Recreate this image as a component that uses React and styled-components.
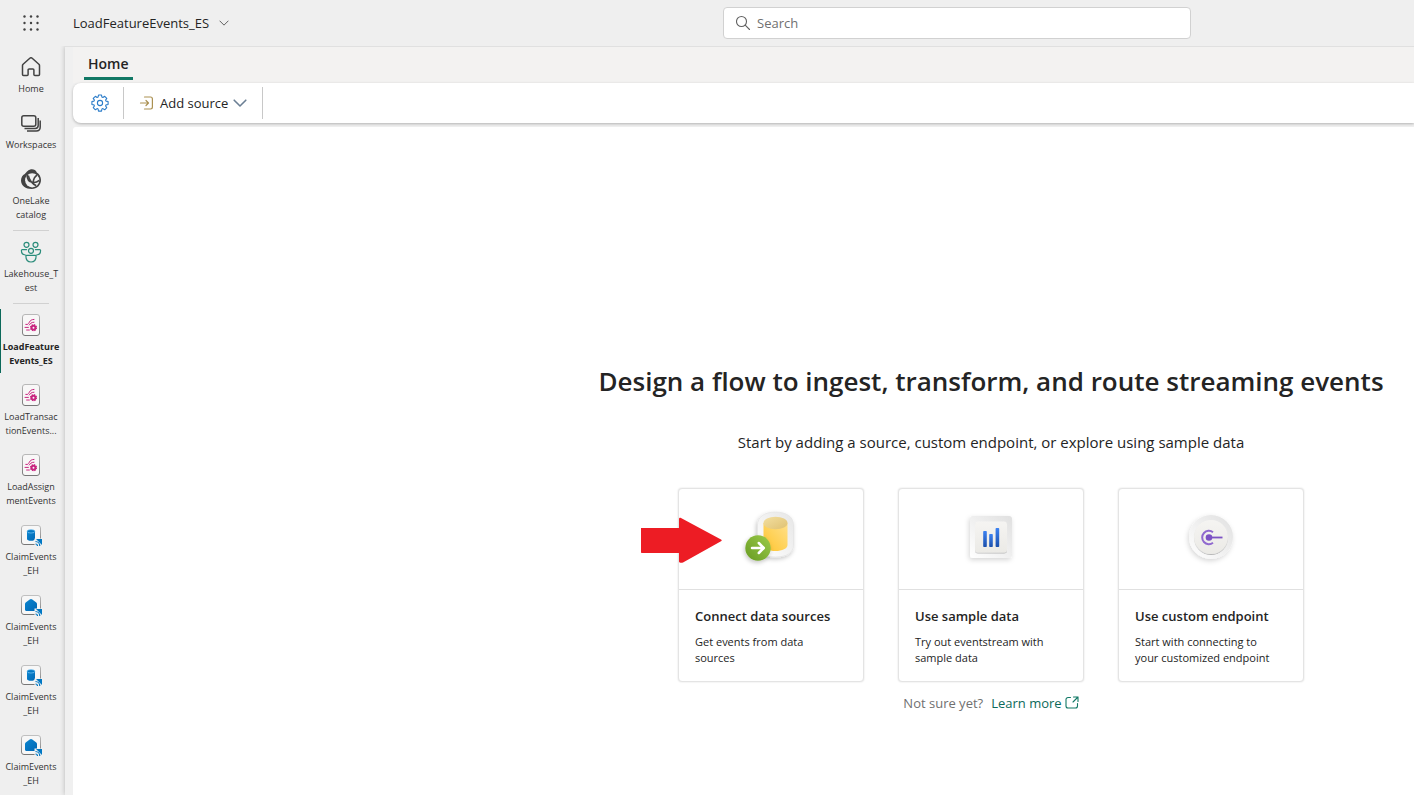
import React from "react";
import styled, { createGlobalStyle } from "styled-components";

const GlobalStyle = createGlobalStyle`
  *, *::before, *::after { box-sizing: border-box; }
  body {
    margin: 0;
    background: #efefef;
    color: #242424;
    font-family: "Open Sans", "Noto Sans", sans-serif;
    font-size: 13px;
    line-height: 20px;
  }
  button { font: inherit; color: inherit; background: none; border: 0; padding: 0; cursor: pointer; }
  svg { display: block; flex: none; }
`;

const Page = styled.div`
  min-height: 100vh;
  display: flex;
  flex-direction: column;
  overflow-x: hidden;
`;

const Header = styled.header`
  display: flex;
  align-items: center;
  height: 46px;
`;

const WaffleButton = styled.button`
  display: grid;
  place-items: center;
  width: 62px;
  height: 46px;
`;

const TitleArea = styled.div`
  flex: 0 1 661px;
  padding-left: 11px;
`;

const TitleButton = styled.button`
  display: flex;
  align-items: center;
  gap: 10px;
  white-space: nowrap;
`;

const SearchBox = styled.label`
  display: flex;
  align-items: center;
  gap: 6px;
  flex: 0 1 468px;
  height: 32px;
  padding: 0 12px;
  background: #fff;
  border: 1px solid #d1d1d1;
  border-radius: 4px;
`;

const SearchInput = styled.input`
  flex: 1;
  min-width: 0;
  border: 0;
  padding: 0;
  outline: 0;
  background: none;
  font: inherit;
  &::placeholder { color: #707070; opacity: 1; }
`;

const Body = styled.div`
  flex: 1;
  display: flex;
`;

const Nav = styled.nav`
  flex: none;
  width: 65px;
  padding-top: 3px;
`;

const NavGroup = styled.ul`
  list-style: none;
  margin: 0;
  padding: 0;
  display: flex;
  flex-direction: column;
  gap: 4px;
`;

const NavDivider = styled.hr`
  width: 36px;
  height: 1px;
  margin: 3px 0 3px 13px;
  border: 0;
  background: #d1d1d1;
`;

const NavButton = styled.button`
  position: relative;
  display: flex;
  flex-direction: column;
  align-items: center;
  gap: 3px;
  width: 62px;
  padding: 6px 0 5px;
  font-size: 9px;
  line-height: 14px;
  font-weight: ${(p) => (p.$active ? 700 : 400)};
  color: ${(p) => (p.$active ? "#242424" : "#333")};
  white-space: nowrap;
  &::before {
    content: "";
    display: ${(p) => (p.$active ? "block" : "none")};
    position: absolute;
    left: 0;
    top: 2px;
    bottom: 0;
    width: 1px;
    background: #0c695a;
  }
`;

const NavIcon = styled.span`
  display: grid;
  place-items: center;
  width: 24px;
  height: 24px;
`;

const NavLine = styled.span`
  display: block;
`;

const Main = styled.main`
  flex: 1;
  min-width: 0;
  display: flex;
  flex-direction: column;
  padding-left: 8px;
  background: #f0f0f0;
  border-top: 1px solid #e0e0e0;
  box-shadow: 0 0 5px rgba(0, 0, 0, 0.24);
  clip-path: inset(0 0 0 -8px);
`;

const TabBar = styled.div`
  display: flex;
  height: 36px;
  padding-left: 11px;
  background: #f3f2f1;
`;

const Tab = styled.button`
  height: 33px;
  padding: 3px 4px 0;
  font-size: 14px;
  font-weight: 600;
  border-bottom: 3px solid #117865;
`;

const Toolbar = styled.div`
  display: flex;
  align-items: center;
  height: 40px;
  margin-bottom: 4px;
  background: #fff;
  border-radius: 8px 0 0 8px;
  box-shadow: 0 1px 3px rgba(0, 0, 0, 0.26);
`;

const ToolButton = styled.button`
  display: flex;
  align-items: center;
  gap: 5px;
  height: 32px;
  padding: 0 ${(p) => (p.$wide ? 15 : 0)}px;
`;

const SettingsButton = styled(ToolButton)`
  width: 50px;
  padding-left: 3px;
  justify-content: center;
`;

const Separator = styled.span`
  width: 1px;
  height: 32px;
  background: #c8c8c8;
`;

const Canvas = styled.section`
  flex: 1;
  display: flex;
  flex-direction: column;
  align-items: center;
  padding: 236px 0 40px 495px;
  background: #fff;
  border-radius: 3px 0 0 0;
`;

const Heading = styled.h1`
  margin: 0;
  font-size: 26px;
  line-height: 36px;
  font-weight: 600;
  white-space: nowrap;
`;

const Subheading = styled.p`
  margin: 33px 0 36px;
  font-size: 15px;
  line-height: 20px;
  white-space: nowrap;
`;

const CardRow = styled.div`
  display: flex;
  gap: 34px;
`;

const Card = styled.button`
  position: relative;
  display: flex;
  flex-direction: column;
  justify-content: flex-start;
  width: 186px;
  height: 194px;
  text-align: left;
  background: #fff;
  border: 1px solid #e4e4e4;
  border-radius: 4px;
  box-shadow: 0 0 2px rgba(0, 0, 0, 0.14);
`;

const CardArt = styled.span`
  flex: none;
  display: grid;
  place-items: center;
  width: 100%;
  height: 101px;
  padding-bottom: 4px;
  border-bottom: 1px solid #e0e0e0;
`;

const CardText = styled.span`
  display: flex;
  flex-direction: column;
  gap: 8px;
  padding: 16px 24px 0 16px;
  font-size: 11px;
  line-height: 16px;
`;

const CardTitle = styled.strong`
  font-size: 13px;
  line-height: 20px;
  font-weight: 600;
  white-space: nowrap;
`;

const Pointer = styled.svg`
  position: absolute;
  left: -39px;
  top: 28px;
`;

const Footnote = styled.p`
  display: flex;
  gap: 8px;
  margin: 11px 0 0;
  color: #707070;
`;

const LearnLink = styled.a`
  display: flex;
  align-items: center;
  gap: 3px;
  color: #0c695a;
  text-decoration: none;
`;

const WaffleIcon = () => (
  <svg width="16" height="16" viewBox="0 0 16 16" fill="#424242">
    {[1.5, 8, 14.5].map((y) => [1.5, 8, 14.5].map((x) => <circle key={`${x}-${y}`} cx={x} cy={y} r="1.2" />))}
  </svg>
);

const Chevron = ({ size, color, stroke }) => (
  <svg width={size} height={size} viewBox="0 0 14 14" fill="none" stroke={color} strokeWidth={stroke} strokeLinecap="round" strokeLinejoin="round">
    <path d="M1.2 4.2 7 10l5.800-5.800" />
  </svg>
);

const SearchIcon = () => (
  <svg width="15" height="16" viewBox="0 0 15 16" fill="none" stroke="#616161" strokeWidth="1.100" strokeLinecap="round">
    <circle cx="5.500" cy="6.500" r="5" />
    <path d="m9.200 10.200 4.300 4.300" />
  </svg>
);

const HomeIcon = () => (
  <svg width="20" height="20" viewBox="0 0 20 20" fill="none" stroke="#424242" strokeWidth="1.500" strokeLinejoin="round">
    <path d="M8.800 1.300a1.800 1.800 0 0 1 2.400 0l6.700 6c.4.400.6.800.6 1.300v9c0 .6-.4 1-1 1h-3.600c-.6 0-1-.4-1-1V13c0-.6-.4-1-1-1H8.100c-.6 0-1 .4-1 1v4.600c0 .6-.4 1-1 1H2.500c-.6 0-1-.4-1-1v-9c0-.5.200-.9.600-1.300z" />
  </svg>
);

const WorkspacesIcon = () => (
  <svg width="20" height="17" viewBox="0 0 20 17" fill="none" stroke="#424242" strokeWidth="1.500">
    <rect x=".8" y=".8" width="14" height="10.500" rx="2" />
    <path d="M3.500 13.500h10.800c1.700 0 2.900-1.200 2.900-2.900V3" />
    <path d="M6 16h9.200c2.400 0 4-1.700 4-4V5.500" />
  </svg>
);

const OneLakeIcon = () => (
  <svg width="20" height="20" viewBox="0 0 20 20" fill="none">
    <path d="M7 1.800C9.500-.6 14.500-.2 15.800 3.500 18.300 5 20 7.700 20 11c0 5-4 9-9.300 9C4.800 20 0 16.500 0 11.500 0 8.500 1.500 6.200 3.800 5 4.600 4 5.500 3 7 1.800z" fill="#424242" />
    <circle cx="11.200" cy="11.300" r="7.100" fill="#efefef" />
    <path d="M6.200 6c-.2 3.700 1.800 6.700 5.300 7.300 2.700.5 5-.6 6.800-2M7.300 6.500c1 4.500 3.500 8.200 8 10.200M12.200 13.500c.2-3.500 1.600-6 4-7.500" stroke="#424242" strokeWidth="1.500" />
  </svg>
);

const PeopleIcon = () => (
  <svg width="22" height="22" viewBox="0 0 22 22" fill="none" stroke="#2a8c7a" strokeWidth="1.200" strokeLinejoin="round" strokeLinecap="round">
    <circle cx="6.500" cy="3.800" r="2.500" />
    <circle cx="15.500" cy="3.800" r="2.500" />
    <circle cx="11" cy="9.800" r="2.500" />
    <path d="M6.600 8.600H2.300c-.5 0-.9.400-.9.900 0 2.400 1.600 4.300 4 4.500M15.400 8.600h4.300c.5 0 .9.400.9.900 0 2.400-1.600 4.300-4 4.500M6.800 14.400h8.400c.5 0 .9.400.9.900 0 3.300-2 5.700-5.100 5.700s-5.100-2.400-5.100-5.700c0-.5.400-.9.900-.9z" />
  </svg>
);

const EventstreamIcon = () => (
  <svg width="18" height="22" viewBox="0 0 18 22" fill="none">
    <defs>
      <linearGradient id="tileA" x1="0" y1="0" x2="0" y2="1">
        <stop offset="0" stopColor="#b8b8b8" />
        <stop offset="1" stopColor="#777" />
      </linearGradient>
    </defs>
    <rect x=".5" y=".5" width="17" height="21" rx="2.500" fill="#f8f7f7" stroke="url(#tileA)" />
    <path d="M3.800 10.400h1.500c2.300 0 1.200-5 6.700-5M3 13.400h3.400M4.600 16h2.800M7.300 11c1.200-1.400 1.700-2.800 4.700-2.800" stroke="#c9247f" strokeWidth="1" strokeLinecap="round" />
    <circle cx="11.500" cy="13.700" r="1.900" stroke="#c9247f" strokeWidth="1.900" />
    <circle cx="11.500" cy="13.700" r="3" stroke="#c9247f" strokeWidth="1.200" strokeDasharray="1.400 .956" />
  </svg>
);

const DataTile = ({ children }) => (
  <svg width="24" height="24" viewBox="0 0 24 24" fill="none">
    <defs>
      <linearGradient id="tileB" x1="0" y1="0" x2="0" y2="1">
        <stop offset="0" stopColor="#c0c0c0" />
        <stop offset="1" stopColor="#777" />
      </linearGradient>
      <linearGradient id="blueFill" x1="0" y1="0" x2="1" y2="1">
        <stop offset="0" stopColor="#0c86d0" />
        <stop offset="1" stopColor="#0067b4" />
      </linearGradient>
    </defs>
    <rect x="2.500" y="2.500" width="19" height="19" rx="2.500" fill="#f7f7f7" stroke="url(#tileB)" />
    {children}
    <path d="M15.500 15.500H24V24h-8.500z" fill="#f0f0f0" />
    <path d="M17 16h6v6z" fill="#0078c4" />
    <path d="M16.500 18.500c2.500 0 4.300 2 4.300 4.500M16.500 21c1.200 0 2 .8 2 2" stroke="#0078c4" strokeWidth="1.200" />
  </svg>
);

const DatabaseIcon = () => (
  <DataTile>
    <path d="M8 8.500v7.400C8 17 9.700 17.800 12 17.800s4-.8 4-1.900V8.500z" fill="url(#blueFill)" />
    <ellipse cx="12" cy="8.300" rx="4" ry="1.700" fill="#0078c4" stroke="#8fd3ff" strokeWidth=".6" />
  </DataTile>
);

const EventhouseIcon = () => (
  <DataTile>
    <path d="M10.700 6.500a2.100 2.100 0 0 1 2.600 0l4 3c.5.400.7.900.7 1.500v5.400c0 .9-.6 1.500-1.500 1.500h-9c-.9 0-1.500-.6-1.500-1.500V11c0-.6.200-1.100.7-1.500z" fill="url(#blueFill)" />
  </DataTile>
);

const GearIcon = () => (
  <svg width="18" height="18" viewBox="0 0 18 18" fill="none" stroke="#2b7cc9" strokeWidth="1.100" strokeLinejoin="round">
    <path d="M7.500 1h3l.4 2.100 1 .4 1.800-1.200L15.800 4.400l-1.200 1.700.4 1 2.100.4v3l-2.100.4-.4 1 1.200 1.800-2.100 2.100-1.800-1.200-1 .4-.4 2.100h-3l-.4-2.100-1-.4-1.700 1.200-2.200-2.100 1.200-1.800-.4-1L.9 10.500v-3l2.100-.4.4-1-1.200-1.700 2.200-2.100 1.700 1.200 1-.4z" />
    <circle cx="9" cy="9" r="2.600" />
  </svg>
);

const AddSourceIcon = () => (
  <svg width="16" height="14" viewBox="0 0 16 14" fill="none" stroke="#ab9152" strokeWidth="1.200" strokeLinecap="round" strokeLinejoin="round">
    <path d="M5.500 1h6c1.200 0 1.900.7 1.900 1.900v8.200c0 1.200-.7 1.900-1.900 1.900h-6M1.500 7h8M7 4.500 9.500 7 7 9.500" />
  </svg>
);

const ConnectArt = () => (
  <svg width="64" height="64" viewBox="0 0 64 64" fill="none">
    <defs>
      <linearGradient id="cyl" x1="0" y1="1" x2="1" y2="0">
        <stop offset="0" stopColor="#ffc52e" />
        <stop offset="1" stopColor="#ffe08a" />
      </linearGradient>
      <linearGradient id="cylTop" x1="0" y1="0" x2="1" y2="1">
        <stop offset="0" stopColor="#f3dfa0" />
        <stop offset="1" stopColor="#dfc172" />
      </linearGradient>
      <linearGradient id="green" x1="0" y1="1" x2="1" y2="0">
        <stop offset="0" stopColor="#679b22" />
        <stop offset="1" stopColor="#9ccb4a" />
      </linearGradient>
      <linearGradient id="shell" x1="0" y1="1" x2="1" y2="0">
        <stop offset="0" stopColor="#fff" />
        <stop offset="1" stopColor="#e6e6e6" />
      </linearGradient>
      <filter id="soft" x="-40%" y="-40%" width="180%" height="180%">
        <feDropShadow dx="-1" dy="2" stdDeviation="2" floodOpacity=".22" />
      </filter>
    </defs>
    <path d="M18.500 20c0-8 7-13 18-13s18 5 18 13v20c0 8-7 12-18 12s-18-4-18-12z" fill="url(#shell)" stroke="#e4e4e4" strokeWidth=".7" filter="url(#soft)" />
    <path d="M24.500 18h24v22c0 3.600-5.300 6-12 6s-12-2.400-12-6z" fill="url(#cyl)" />
    <ellipse cx="36.500" cy="18" rx="12" ry="6.200" fill="url(#cylTop)" />
    <circle cx="19" cy="43" r="12.700" fill="url(#green)" filter="url(#soft)" />
    <path d="M13 43h11.500m-4.700-5 5 5-5 5" stroke="#fff" strokeWidth="2.500" strokeLinecap="round" strokeLinejoin="round" />
  </svg>
);

const SampleArt = () => (
  <svg width="64" height="64" viewBox="0 0 64 64" fill="none">
    <defs>
      <linearGradient id="frame" x1="0" y1="1" x2="1" y2="0">
        <stop offset="0" stopColor="#fff" />
        <stop offset="1" stopColor="#e0e0e0" />
      </linearGradient>
      <linearGradient id="plate" x1="0" y1="0" x2="0" y2="1">
        <stop offset="0" stopColor="#f5f4f2" />
        <stop offset="1" stopColor="#ebeae6" />
      </linearGradient>
      <linearGradient id="bars" x1="0" y1="0" x2="0" y2="1">
        <stop offset="0" stopColor="#3c82f2" />
        <stop offset="1" stopColor="#1b4fab" />
      </linearGradient>
      <filter id="frameShadow" x="-40%" y="-40%" width="180%" height="180%">
        <feDropShadow dx="-1" dy="2" stdDeviation="2.500" floodOpacity=".16" />
      </filter>
      <filter id="plateShadow" x="-20%" y="-20%" width="140%" height="140%">
        <feDropShadow dx="0" dy="1" stdDeviation=".7" floodOpacity=".25" />
      </filter>
    </defs>
    <rect x="11" y="11" width="42" height="42" rx="3" fill="url(#frame)" filter="url(#frameShadow)" />
    <rect x="16" y="16.500" width="32" height="31" rx="3" fill="url(#plate)" filter="url(#plateShadow)" />
    <g fill="url(#bars)">
      <rect x="24.200" y="26" width="3.600" height="16" rx=".8" />
      <rect x="30.200" y="29" width="3.600" height="13" rx=".8" />
      <rect x="36.600" y="23" width="3.600" height="19" rx=".8" />
    </g>
  </svg>
);

const EndpointArt = () => (
  <svg width="64" height="64" viewBox="0 0 64 64" fill="none">
    <circle cx="32" cy="32" r="22" fill="url(#frame)" filter="url(#frameShadow)" />
    <circle cx="32" cy="32" r="17" fill="url(#plate)" filter="url(#plateShadow)" />
    <path d="M34 27.200a6.700 6.700 0 1 0 0 10.600" stroke="#9069cf" strokeWidth="2" />
    <circle cx="30" cy="32.500" r="3.300" fill="#7c52c4" />
    <path d="M31.500 32.500h12" stroke="#7c52c4" strokeWidth="1.800" />
  </svg>
);

const ExternalIcon = () => (
  <svg width="14" height="14" viewBox="0 0 14 14" fill="none" stroke="#117865" strokeWidth="1.100" strokeLinecap="round" strokeLinejoin="round">
    <path d="M5.500 1.500H3A2 2 0 0 0 1 3.500V10a2 2 0 0 0 2 2h7.500a2 2 0 0 0 2-2V7.500M8.500 1H13v4.500M13 1 8 6" />
  </svg>
);

const navGroups = [
  [
    { id: "home", icon: HomeIcon, lines: ["Home"] },
    { id: "workspaces", icon: WorkspacesIcon, lines: ["Workspaces"] },
    { id: "onelake", icon: OneLakeIcon, lines: ["OneLake", "catalog"] },
  ],
  [{ id: "lakehouse", icon: PeopleIcon, lines: ["Lakehouse_T", "est"] }],
  [
    { id: "feature", icon: EventstreamIcon, lines: ["LoadFeature", "Events_ES"], active: true },
    { id: "transaction", icon: EventstreamIcon, lines: ["LoadTransac", "tionEvents..."] },
    { id: "assignment", icon: EventstreamIcon, lines: ["LoadAssign", "mentEvents"] },
    { id: "claim-db-1", icon: DatabaseIcon, lines: ["ClaimEvents", "_EH"] },
    { id: "claim-house-1", icon: EventhouseIcon, lines: ["ClaimEvents", "_EH"] },
    { id: "claim-db-2", icon: DatabaseIcon, lines: ["ClaimEvents", "_EH"] },
    { id: "claim-house-2", icon: EventhouseIcon, lines: ["ClaimEvents", "_EH"] },
  ],
];

const cards = [
  { title: "Connect data sources", text: "Get events from data sources", art: ConnectArt, pointed: true },
  { title: "Use sample data", text: "Try out eventstream with sample data", art: SampleArt },
  { title: "Use custom endpoint", text: "Start with connecting to your customized endpoint", art: EndpointArt },
];

export default function App() {
  return (
    <Page>
      <GlobalStyle />
      <Header>
        <WaffleButton aria-label="App launcher"><WaffleIcon /></WaffleButton>
        <TitleArea>
          <TitleButton>
            LoadFeatureEvents_ES
            <Chevron size={10} color="#616161" stroke={1.4} />
          </TitleButton>
        </TitleArea>
        <SearchBox>
          <SearchIcon />
          <SearchInput type="text" placeholder="Search" aria-label="Search" />
        </SearchBox>
      </Header>
      <Body>
        <Nav>
          {navGroups.map((group, i) => (
            <React.Fragment key={group[0].id}>
              {i > 0 && <NavDivider />}
              <NavGroup>
                {group.map(({ id, icon: Icon, lines, active }) => (
                  <li key={id}>
                    <NavButton $active={active}>
                      <NavIcon><Icon /></NavIcon>
                      <span>{lines.map((line) => <NavLine key={line}>{line}</NavLine>)}</span>
                    </NavButton>
                  </li>
                ))}
              </NavGroup>
            </React.Fragment>
          ))}
        </Nav>
        <Main>
          <TabBar><Tab>Home</Tab></TabBar>
          <Toolbar>
            <SettingsButton aria-label="Settings"><GearIcon /></SettingsButton>
            <Separator />
            <ToolButton $wide>
              <AddSourceIcon />
              Add source
              <Chevron size={14} color="#6b7f94" stroke={1.6} />
            </ToolButton>
            <Separator />
          </Toolbar>
          <Canvas>
            <Heading>Design a flow to ingest, transform, and route streaming events</Heading>
            <Subheading>Start by adding a source, custom endpoint, or explore using sample data</Subheading>
            <CardRow>
              {cards.map(({ title, text, art: Art, pointed }) => (
                <Card key={title}>
                  <CardArt><Art /></CardArt>
                  <CardText>
                    <CardTitle>{title}</CardTitle>
                    <span>{text}</span>
                  </CardText>
                  {pointed && (
                    <Pointer width="82" height="46" viewBox="0 0 82 46" fill="#ed1c24">
                      <path d="M1 11h38V2c0-1 1-1.500 2-1L81 22.500c1 .5 1 1.200 0 1.700L43 45.500c-2 .6-4 0-4-1V36H2c-.6 0-1-.4-1-1z" />
                    </Pointer>
                  )}
                </Card>
              ))}
            </CardRow>
            <Footnote>
              Not sure yet?
              <LearnLink href="#learn-more">Learn more<ExternalIcon /></LearnLink>
            </Footnote>
          </Canvas>
        </Main>
      </Body>
    </Page>
  );
}
